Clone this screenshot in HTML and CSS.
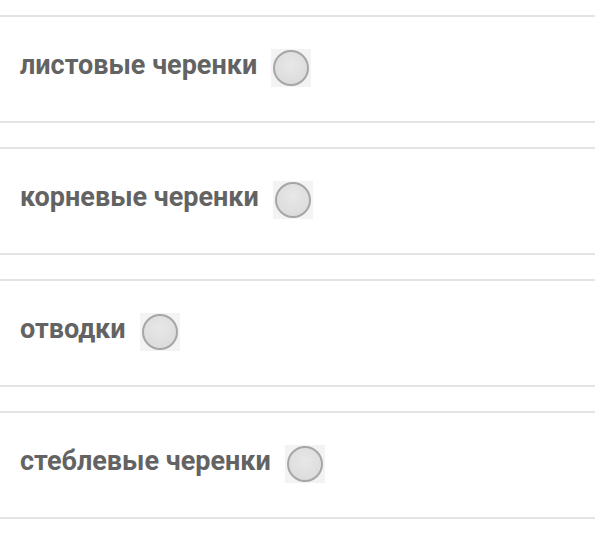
FILE: index.html
```html
<!DOCTYPE html>
<html lang="ru">
<head>
<meta charset="utf-8">
<link rel="stylesheet" href="styles.css">
</head>
<body>
<div class="list">
  <div class="card"><span class="label">листовые черенки</span><span class="radio"><span class="dot"></span></span></div>
  <div class="card"><span class="label">корневые черенки</span><span class="radio"><span class="dot"></span></span></div>
  <div class="card"><span class="label">отводки</span><span class="radio"><span class="dot"></span></span></div>
  <div class="card"><span class="label">стеблевые черенки</span><span class="radio"><span class="dot"></span></span></div>
</div>
</body>
</html>
```
FILE: styles.css
```css
html, body {
  margin: 0;
  padding: 0;
  background: #ffffff;
}
.list {
  padding-top: 15px;
  display: flex;
  flex-direction: column;
  gap: 24px;
}
.card {
  height: 96px;
  border-top: 2px solid #e4e4e4;
  border-bottom: 2px solid #e4e4e4;
  display: flex;
  align-items: center;
  padding: 0 0 8px 20px;
  box-sizing: content-box;
}
.label {
  font-family: Roboto, "Noto Sans", sans-serif;
  font-weight: bold;
  font-size: 27px;
  color: #636363;
}
.radio {
  margin-left: 14px;
  width: 40px;
  height: 38px;
  background: #f3f3f3;
  display: flex;
  align-items: center;
  justify-content: center;
  margin-top: 6px;
}
.dot {
  width: 32px;
  height: 32px;
  border-radius: 50%;
  border: 2px solid #a6a6a6;
  background: radial-gradient(circle at 50% 40%, #e8e8e8, #d8d8d8);
}
```
